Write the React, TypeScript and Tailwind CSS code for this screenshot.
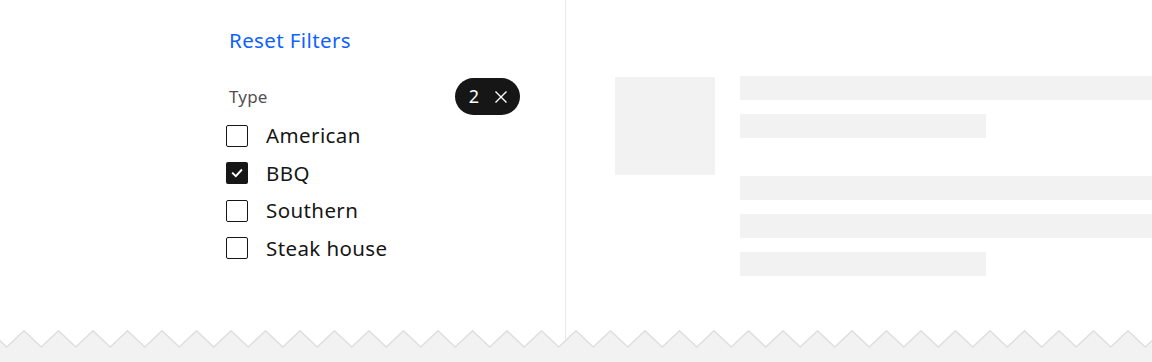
import type { ReactNode } from "react";

const font = { fontFamily: '"Noto Sans", Roboto, sans-serif' };

const types = [
  { label: "American", checked: false },
  { label: "BBQ", checked: true },
  { label: "Southern", checked: false },
  { label: "Steak house", checked: false },
];

function Checkbox({ checked }: { checked: boolean }) {
  if (checked) {
    return (
      <span className="flex h-[22px] w-[22px] items-center justify-center rounded-[2px] bg-[#161616]">
        <svg width="14" height="14" viewBox="0 0 14 14" fill="none">
          <path d="M2.8 7.3l3 2.8L11.3 4.2" stroke="#fff" strokeWidth="1.9" strokeLinecap="square" />
        </svg>
      </span>
    );
  }
  return <span className="block h-[22px] w-[22px] rounded-[2px] border-[1.5px] border-[#161616] bg-white" />;
}

function Bar({ className = "" }: { className?: string }): ReactNode {
  return <div className={`h-6 bg-[#f2f2f2] ${className}`} />;
}

function Zigzag() {
  const pts: string[] = ["0,32", "0,10"];
  for (let k = -1; k < 36; k++) {
    const peak = 24 + 34.5 * k;
    pts.push(`${peak},0.8`);
    pts.push(`${peak + 17.25},17`);
  }
  pts.push("1152,32");
  const line = pts.slice(1, -1).join(" ");
  return (
    <svg className="relative -mt-[17px] block" width="1152" height="32" viewBox="0 0 1152 32">
      <polygon points={pts.join(" ")} fill="#f2f2f2" />
      <polyline points={line} fill="none" stroke="#dedede" strokeWidth="1.5" />
    </svg>
  );
}

export default function App() {
  return (
    <div className="h-[362px] w-[1152px] overflow-hidden bg-white" style={font}>
      <div className="flex h-[347px]">
        <aside className="w-[566px] shrink-0 border-r border-[#e8e8e8] pl-[229px] pr-[45px] pt-[26px]">
          <button className="text-[20.5px] leading-7 tracking-[0.4px] text-[#0f62fe]">Reset Filters</button>
          <div className="mt-[24px] flex h-[37px] items-center justify-between">
            <span className="text-[17px] tracking-[0.2px] text-[#525252]">Type</span>
            <span className="flex h-[37px] items-center gap-[15px] rounded-full bg-[#161616] pl-[14px] pr-[12px] text-[18px] text-white">
              2
              <svg width="14" height="14" viewBox="0 0 14 14" fill="none">
                <path d="M1.5 1.5l11 11M12.5 1.5l-11 11" stroke="#fff" strokeWidth="1.4" />
              </svg>
            </span>
          </div>
          <ul className="mt-[2px]">
            {types.map((t) => (
              <li key={t.label} className="-ml-[3px] flex h-[37.5px] items-center gap-[18px]">
                <Checkbox checked={t.checked} />
                <span className="text-[20.5px] tracking-[0.4px] text-[#161616]">{t.label}</span>
              </li>
            ))}
          </ul>
        </aside>
        <main className="flex flex-1 gap-[25px] pl-[49px] pt-[76px]">
          <div className="mt-[1px] h-[98px] w-[100px] shrink-0 bg-[#f2f2f2]" />
          <div className="flex flex-1 flex-col">
            <Bar />
            <Bar className="mt-[14px] w-[246px]" />
            <Bar className="mt-[38px]" />
            <Bar className="mt-[14px]" />
            <Bar className="mt-[14px] w-[246px]" />
          </div>
        </main>
      </div>
      <Zigzag />
    </div>
  );
}
